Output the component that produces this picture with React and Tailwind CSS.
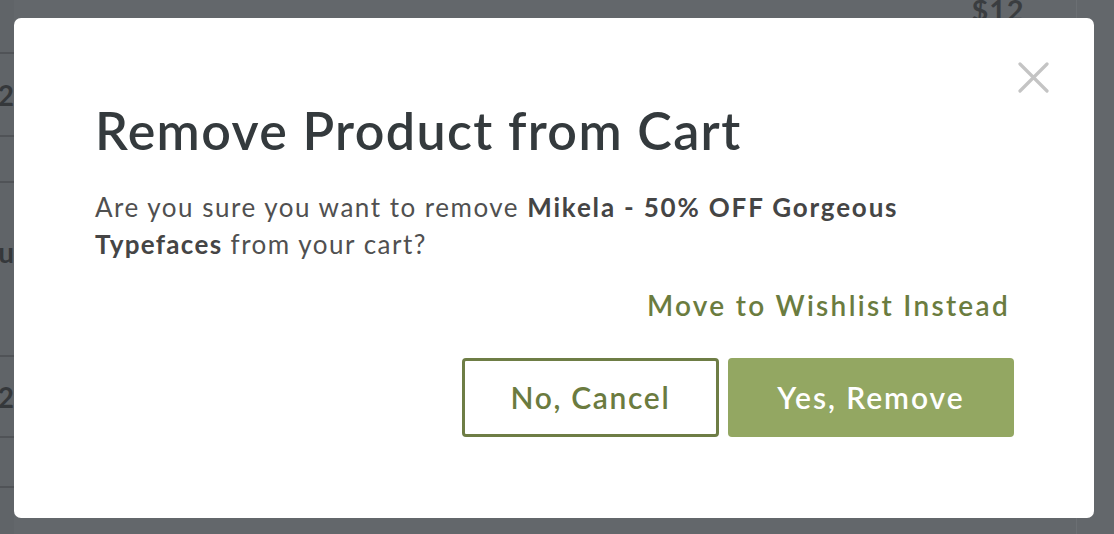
import React from "react";

function Background() {
  const rows = [
    { h: 54, t: "", pb: 0 },
    { h: 83, t: "$12", pb: 0 },
    { h: 46, t: "", pb: 0 },
    { h: 174, t: "You", pb: 34 },
    { h: 81, t: "$12", pb: 0 },
    { h: 50, t: "", pb: 0 },
  ];
  return (
    <div className="flex h-full w-full bg-[#63676b]">
      <div className="flex w-[14px] shrink-0 flex-col overflow-hidden bg-[#606468]">
        {rows.map((r, i) => (
          <div
            key={i}
            style={{ height: r.h, paddingBottom: r.pb }}
            className="flex shrink-0 items-center justify-end border-b-2 border-[#505357] text-[28px] font-bold text-[#35383b]"
          >
            {r.t}
          </div>
        ))}
      </div>
      <div className="flex-1" />
      <div className="flex w-[120px] shrink-0 justify-center pr-[36px]">
        <div className="-mt-[8px] text-[29px] font-bold leading-[36px] tracking-[0.03em] text-[#3a3d40]">
          $12
        </div>
      </div>
      <div className="w-px shrink-0 bg-[#6b6f73]" />
      <div className="w-[37px] shrink-0" />
    </div>
  );
}

function CloseIcon() {
  return (
    <svg width="31" height="31" viewBox="0 0 31 31" fill="none">
      <path
        d="M2 2 L29 29 M29 2 L2 29"
        stroke="#c4c4c4"
        strokeWidth="3.2"
        strokeLinecap="round"
      />
    </svg>
  );
}

export default function App() {
  return (
    <div
      className="relative h-[534px] w-[1114px] overflow-hidden"
      style={{ fontFamily: "Lato, 'Noto Sans', sans-serif" }}
    >
      <Background />
      <div className="absolute left-[14px] top-[18px] flex h-[500px] w-[1080px] flex-col rounded-[7px] bg-white pl-[81px] pr-[80px] pt-[81px]">
        <button className="absolute right-[45px] top-[44px]">
          <CloseIcon />
        </button>
        <h2 className="text-[52px] font-semibold leading-[62px] tracking-[0.026em] text-[#343a3d]">
          Remove Product from Cart
        </h2>
        <p className="mt-[28px] text-[26px] leading-[37px] tracking-[0.058em] text-[#505050]">
          Are you sure you want to remove{" "}
          <span className="font-bold tracking-[0.07em] text-[#454545]">Mikela - 50% OFF Gorgeous</span>
          <br />
          <span className="font-bold tracking-[0.05em] text-[#454545]">Typefaces</span> from your cart?
        </p>
        <div className="mt-[24px] flex justify-end pr-[4px]">
          <a className="text-[28px] font-semibold leading-[36px] tracking-[0.082em] text-[#6b7c3f]">
            Move to Wishlist Instead
          </a>
        </div>
        <div className="mt-[35px] flex justify-end gap-[9px]">
          <button className="h-[79px] w-[257px] rounded-[4px] border-[3px] border-[#6e7d45] text-[30px] font-semibold tracking-[0.055em] text-[#6b7b3f]">
            No, Cancel
          </button>
          <button className="h-[79px] w-[286px] rounded-[4px] bg-[#93a762] text-[30px] font-semibold tracking-[0.065em] text-white">
            Yes, Remove
          </button>
        </div>
      </div>
    </div>
  );
}
